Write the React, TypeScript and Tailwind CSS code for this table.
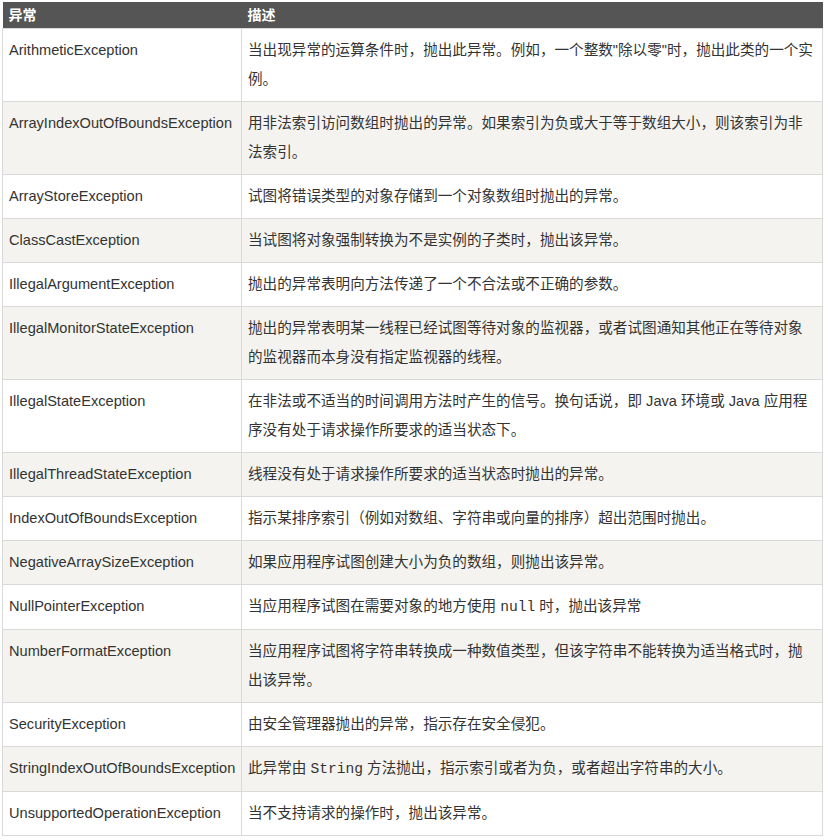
const rows: { name: string; desc: React.ReactNode }[] = [
  { name: "ArithmeticException", desc: "当出现异常的运算条件时，抛出此异常。例如，一个整数\"除以零\"时，抛出此类的一个实例。" },
  { name: "ArrayIndexOutOfBoundsException", desc: "用非法索引访问数组时抛出的异常。如果索引为负或大于等于数组大小，则该索引为非法索引。" },
  { name: "ArrayStoreException", desc: "试图将错误类型的对象存储到一个对象数组时抛出的异常。" },
  { name: "ClassCastException", desc: "当试图将对象强制转换为不是实例的子类时，抛出该异常。" },
  { name: "IllegalArgumentException", desc: "抛出的异常表明向方法传递了一个不合法或不正确的参数。" },
  { name: "IllegalMonitorStateException", desc: "抛出的异常表明某一线程已经试图等待对象的监视器，或者试图通知其他正在等待对象的监视器而本身没有指定监视器的线程。" },
  { name: "IllegalStateException", desc: "在非法或不适当的时间调用方法时产生的信号。换句话说，即 Java 环境或 Java 应用程序没有处于请求操作所要求的适当状态下。" },
  { name: "IllegalThreadStateException", desc: "线程没有处于请求操作所要求的适当状态时抛出的异常。" },
  { name: "IndexOutOfBoundsException", desc: "指示某排序索引（例如对数组、字符串或向量的排序）超出范围时抛出。" },
  { name: "NegativeArraySizeException", desc: "如果应用程序试图创建大小为负的数组，则抛出该异常。" },
  {
    name: "NullPointerException",
    desc: (
      <>
        当应用程序试图在需要对象的地方使用 <code className="font-['Liberation_Mono',monospace]">null</code> 时，抛出该异常
      </>
    ),
  },
  { name: "NumberFormatException", desc: "当应用程序试图将字符串转换成一种数值类型，但该字符串不能转换为适当格式时，抛出该异常。" },
  { name: "SecurityException", desc: "由安全管理器抛出的异常，指示存在安全侵犯。" },
  {
    name: "StringIndexOutOfBoundsException",
    desc: (
      <>
        此异常由 <code className="font-['Liberation_Mono',monospace]">String</code> 方法抛出，指示索引或者为负，或者超出字符串的大小。
      </>
    ),
  },
  { name: "UnsupportedOperationException", desc: "当不支持请求的操作时，抛出该异常。" },
]

export default function App() {
  return (
    <div className="min-h-[840px] bg-white pl-[2px] pt-[2px] font-['Liberation_Sans','Noto_Sans_CJK_SC',sans-serif] text-[14.6px] text-[#333]">
      <table className="w-[821px] table-fixed border-collapse">
        <colgroup>
          <col className="w-[239px]" />
          <col />
        </colgroup>
        <thead>
          <tr className="bg-[#555555] text-white">
            <th className="h-[26px] px-[6px] text-left text-[14px] font-bold leading-[18px]">异常</th>
            <th className="h-[26px] px-[6px] text-left text-[14px] font-bold leading-[18px]">描述</th>
          </tr>
        </thead>
        <tbody>
          {rows.map((r, i) => (
            <tr key={r.name} className={i % 2 === 0 ? "bg-white" : "bg-[#f4f3ef]"}>
              <td className="border border-[#d9d9d9] px-[6px] py-[7px] align-top leading-[29px]">{r.name}</td>
              <td className="border border-[#d9d9d9] px-[6px] py-[7px] align-top leading-[29px]">{r.desc}</td>
            </tr>
          ))}
        </tbody>
      </table>
    </div>
  )
}
